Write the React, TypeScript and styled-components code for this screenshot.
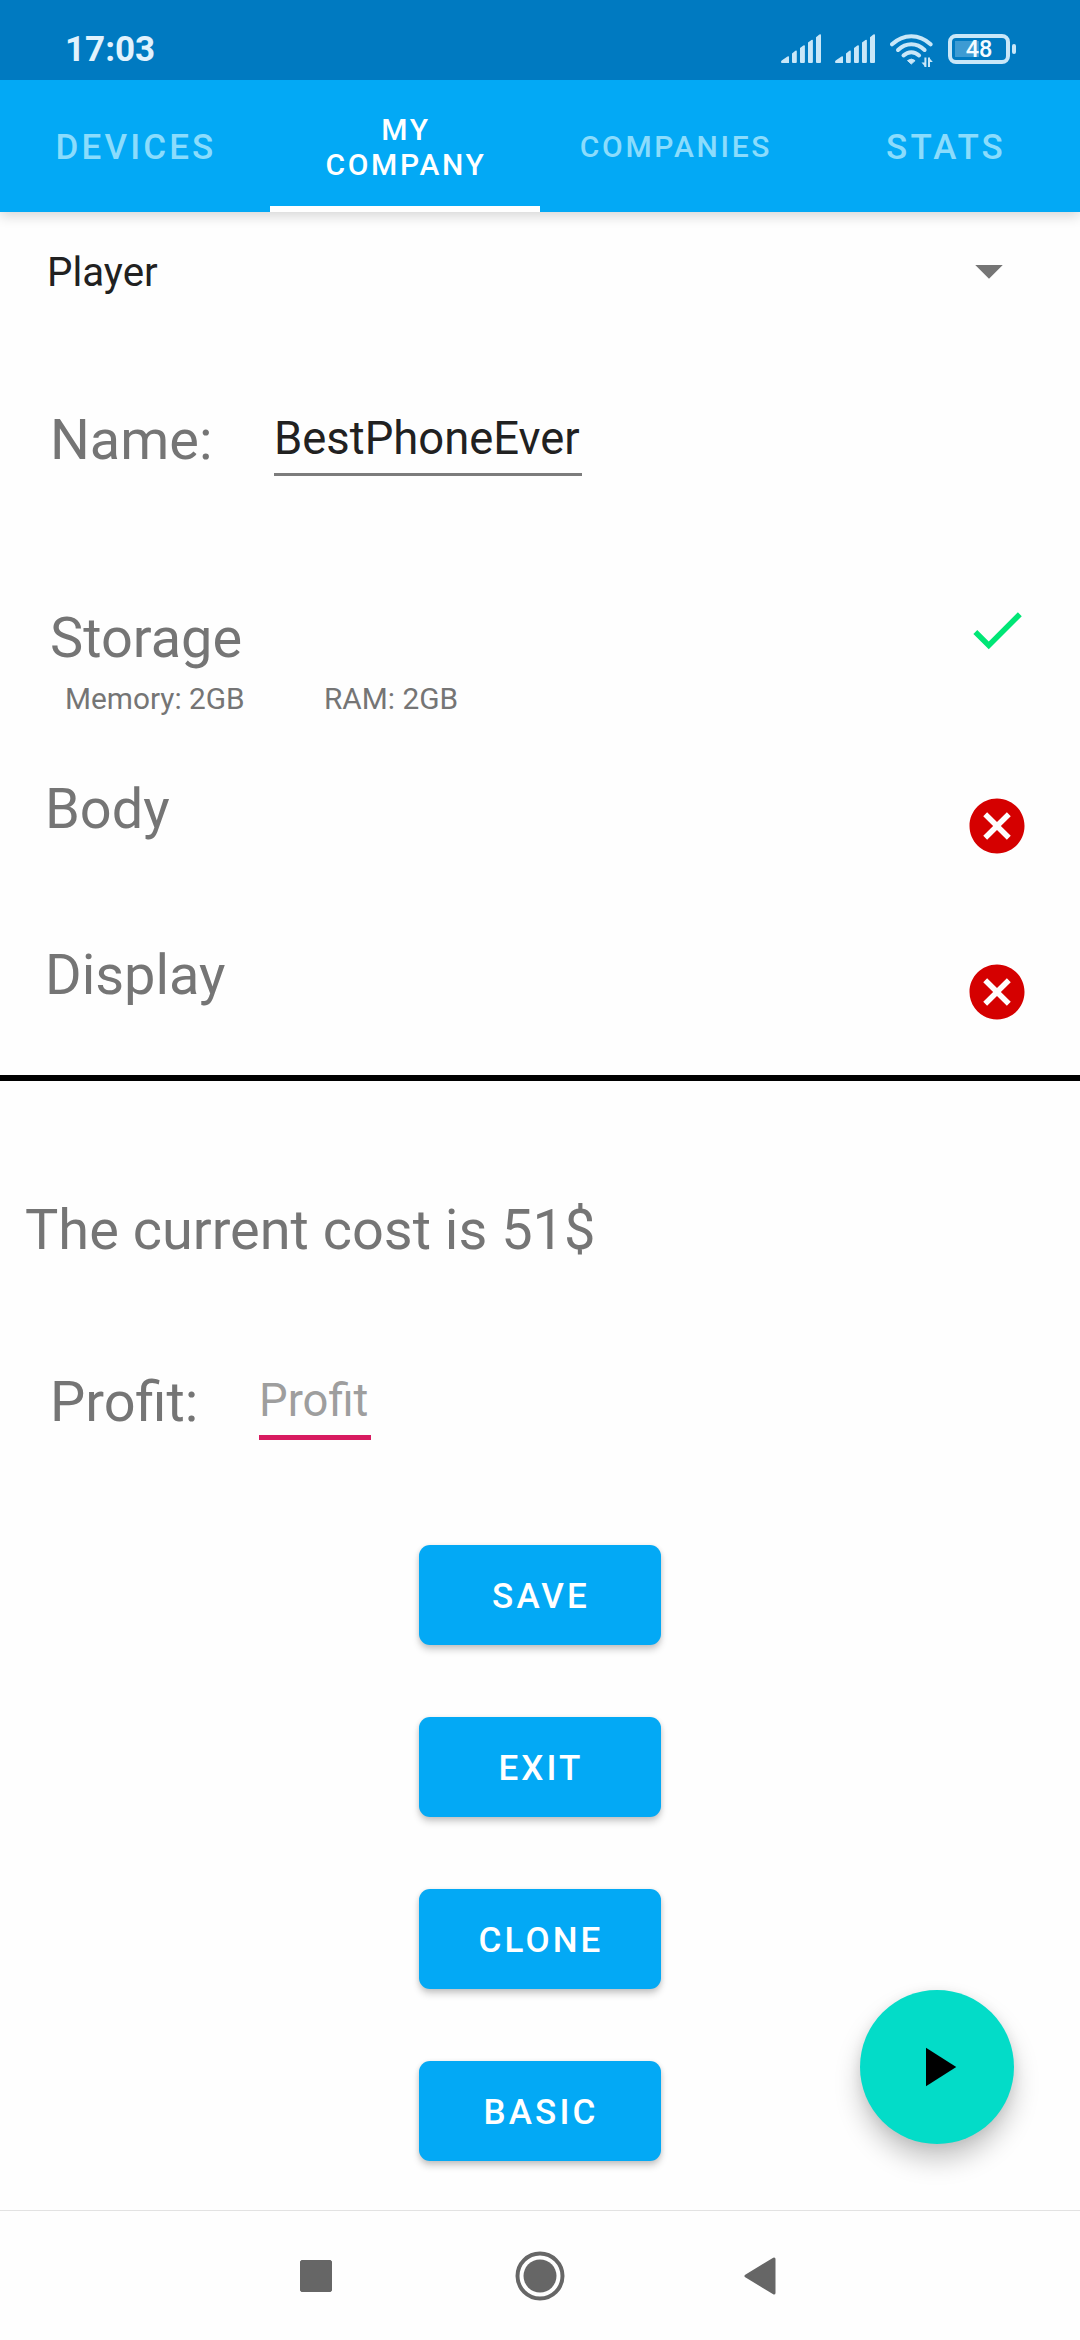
import React from "react";
import styled, { createGlobalStyle } from "styled-components";

const GlobalStyle = createGlobalStyle`
  html, body { margin: 0; padding: 0; background: #fefefe; }
  * { box-sizing: border-box; }
`;

const Screen = styled.div`
  position: relative;
  display: flex;
  flex-direction: column;
  width: 1080px;
  height: 2340px;
  overflow: hidden;
  background: #fefefe;
  color: #757575;
  font-family: Roboto, "Noto Sans", sans-serif;
`;

const StatusBar = styled.header`
  position: relative;
  z-index: 2;
  display: flex;
  flex: none;
  align-items: flex-start;
  justify-content: space-between;
  height: 80px;
  padding: 34px 64px 0 65px;
  background: #007ac1;
`;

const Clock = styled.time`
  margin-top: -4px;
  color: #e1f2fd;
  font-size: 35px;
  font-weight: 700;
  line-height: 40px;
`;

const StatusIcons = styled.div`
  display: flex;
  align-items: flex-start;
`;

const SignalIcon = styled.svg`
  width: 40px;
  height: 30px;
  margin-right: 14px;
  fill: #c9e7f8;
`;

const WifiIcon = styled.svg`
  width: 44px;
  height: 34px;
  margin: 0 14px 0 1px;
`;

const Battery = styled.div`
  display: flex;
  align-items: center;
  gap: 2px;
`;

const BatteryCase = styled.div`
  display: flex;
  align-items: center;
  justify-content: center;
  width: 62px;
  height: 30px;
  border: 4px solid #c9e7f8;
  border-radius: 8px;
  background: linear-gradient(#3d9bd3, #3d9bd3) 3px 3px / 24px 16px no-repeat;
  color: #f4fbff;
  font-size: 23.5px;
  font-weight: 500;
  line-height: 22px;
`;

const BatteryTip = styled.div`
  width: 4px;
  height: 10px;
  border-radius: 2px;
  background: #c9e7f8;
`;

const TabBar = styled.nav`
  position: relative;
  z-index: 1;
  display: grid;
  grid-template-columns: repeat(4, 270px);
  flex: none;
  height: 132px;
  background: #03a9f5;
  box-shadow: 0 4px 12px rgba(0, 0, 0, 0.16);
`;

const Tab = styled.a<{ $active?: boolean; $compact?: boolean }>`
  display: flex;
  align-items: center;
  justify-content: center;
  padding: ${(p) => (p.$active ? "8px 38px 0 40px" : p.$compact ? "0 0 0 2px" : "2px 0 0 2px")};
  border-bottom: ${(p) => (p.$active ? "6px solid #fff" : "none")};
  color: ${(p) => (p.$active ? "#fff" : "#8bdcfc")};
  font-size: ${(p) => (p.$compact ? "30px" : "35px")};
  font-weight: 500;
  line-height: ${(p) => (p.$compact ? "35px" : "41px")};
  letter-spacing: 0.0893em;
  text-align: center;
`;

const Content = styled.main`
  display: flex;
  flex-direction: column;
  flex: 1;
  min-height: 0;
`;

const Spinner = styled.div`
  display: flex;
  align-items: center;
  justify-content: space-between;
  flex: none;
  height: 120px;
  padding: 0 77px 0 47px;
  color: #212121;
  font-size: 40.3px;
  line-height: 48px;
`;

const Selected = styled.span`
  padding-top: 1px;
`;

const Caret = styled.svg`
  width: 28px;
  height: 14px;
  fill: #757575;
`;

const FieldRow = styled.div<{ $height: number; $top: number; $label: number }>`
  display: grid;
  grid-template-columns: ${(p) => p.$label}px auto;
  align-items: start;
  justify-content: start;
  flex: none;
  height: ${(p) => p.$height}px;
  padding: ${(p) => p.$top}px 0 0 50px;
`;

const Heading = styled.div`
  font-size: 55.9px;
  line-height: 66px;
  white-space: nowrap;
`;

const TextField = styled.div<{ $focused?: boolean; $width: number }>`
  width: ${(p) => p.$width}px;
  margin-top: 6px;
  padding-bottom: 8px;
  border-bottom: ${(p) => (p.$focused ? "5px solid #d81b60" : "3px solid #7c7c7c")};
  color: ${(p) => (p.$focused ? "#9e9e9e" : "#212121")};
  font-size: 45.4px;
  line-height: 52px;
  white-space: nowrap;
`;

const PartRow = styled.section<{ $height: number; $left: number }>`
  display: flex;
  align-items: flex-start;
  justify-content: space-between;
  flex: none;
  height: ${(p) => p.$height}px;
  padding: 0 50px 0 ${(p) => p.$left}px;
`;

const PartText = styled.div<{ $drop?: boolean }>`
  padding-top: ${(p) => (p.$drop ? 8 : 0)}px;
`;

const Specs = styled.div`
  display: grid;
  grid-template-columns: 259px auto;
  margin-top: 9px;
  padding-left: 15px;
  font-size: 29.8px;
  line-height: 37px;
`;

const PartIcon = styled.svg<{ $drop?: boolean }>`
  width: 66px;
  height: 66px;
  margin-top: ${(p) => (p.$drop ? 17 : 0)}px;
`;

const Divider = styled.hr`
  flex: none;
  width: 100%;
  height: 6px;
  margin: 0;
  border: 0;
  background: #000;
`;

const Cost = styled(Heading)`
  flex: none;
  height: 172px;
  margin-top: 116px;
  padding-left: 25px;
`;

const Actions = styled.div`
  display: flex;
  flex-direction: column;
  align-items: center;
  gap: 72px;
`;

const ActionButton = styled.button`
  width: 242px;
  height: 100px;
  padding: 2px 0 0 2px;
  border: 0;
  border-radius: 11px;
  background: #03a9f5;
  box-shadow: 0 5px 7px rgba(0, 0, 0, 0.18), 0 1px 5px rgba(0, 0, 0, 0.1);
  color: #fff;
  font-family: inherit;
  font-size: 35px;
  font-weight: 500;
  letter-spacing: 0.0893em;
`;

const Fab = styled.button`
  position: absolute;
  right: 66px;
  bottom: 196px;
  display: grid;
  place-items: center;
  width: 154px;
  height: 154px;
  padding: 0;
  border: 0;
  border-radius: 50%;
  background: #03dcc8;
  box-shadow: 0 16px 26px rgba(0, 0, 0, 0.22), 0 2px 12px rgba(0, 0, 0, 0.08);
`;

const NavBar = styled.footer`
  flex: none;
  display: flex;
  align-items: center;
  height: 130px;
  padding: 0 304px 0 300px;
  justify-content: space-between;
  border-top: 1px solid #e2e2e2;
`;

const NavIcon = styled.svg`
  fill: #666;
  stroke: #666;
`;

const HomeIcon = styled(NavIcon)`
  margin-left: 3px;
`;

const Signal = () => (
  <SignalIcon viewBox="0 0 40 30">
    <path d="M0 28Q0 27 1 26.3L6.5 22.6Q8 21.6 8 23V29H1Q0 29 0 28Z" />
    <path d="M11 19.4L14.4 16.8Q15.8 16 15.8 17.6V28Q15.8 29 14.8 29H12Q11 29 11 28Z" />
    <path d="M19 14L22.4 11.4Q23.9 10.6 23.9 12.2V28Q23.9 29 22.9 29H20Q19 29 19 28Z" />
    <path d="M27 8.6L30.4 6Q31.9 5.2 31.9 6.8V28Q31.9 29 30.9 29H28Q27 29 27 28Z" />
    <path d="M35 3.2L38.4 .6Q40 -.2 40 1.4V28Q40 29 39 29H36Q35 29 35 28Z" />
  </SignalIcon>
);

const Wifi = () => (
  <WifiIcon viewBox="0 0 44 34" fill="none" stroke="#c9e7f8" strokeWidth="4">
    <path d="M2 10.3Q10.5 2.2 21.3 2.2T40.6 10.3" strokeLinecap="round" />
    <path d="M8 16Q14 10.3 21.3 10.3T34.6 16" strokeLinecap="round" />
    <path d="M13.5 21.5Q17 18.2 21.3 18.2T29.1 21.5" strokeLinecap="round" />
    <path d="M17.5 26.6Q21.3 23.6 25.1 26.6L21.3 30Z" fill="#c9e7f8" strokeWidth="1" strokeLinejoin="round" />
    <path d="M35.4 23.5V33M39 33V23.5" strokeWidth="2" />
    <path d="M31.5 28.5H35V32.5ZM42.8 28H39.4V24Z" fill="#c9e7f8" stroke="none" />
  </WifiIcon>
);

const Cancel = () => (
  <PartIcon $drop viewBox="0 0 24 24" fill="#d50000">
    <path d="M12 2C6.47 2 2 6.47 2 12s4.47 10 10 10 10-4.47 10-10S17.53 2 12 2zm5 13.59L15.59 17 12 13.41 8.41 17 7 15.59 10.59 12 7 8.41 8.41 7 12 10.59 15.59 7 17 8.41 13.41 12 17 15.59z" />
  </PartIcon>
);

const actions = ["SAVE", "EXIT", "CLONE", "BASIC"];

export default function App() {
  return (
    <>
      <GlobalStyle />
      <Screen>
        <StatusBar>
          <Clock>17:03</Clock>
          <StatusIcons>
            <Signal />
            <Signal />
            <Wifi />
            <Battery>
              <BatteryCase>48</BatteryCase>
              <BatteryTip />
            </Battery>
          </StatusIcons>
        </StatusBar>
        <TabBar>
          <Tab>DEVICES</Tab>
          <Tab $active $compact>MY COMPANY</Tab>
          <Tab $compact>COMPANIES</Tab>
          <Tab>STATS</Tab>
        </TabBar>
        <Content>
          <Spinner>
            <Selected>Player</Selected>
            <Caret viewBox="0 0 28 14">
              <path d="M.25 0h27.5L14 13.75z" />
            </Caret>
          </Spinner>
          <FieldRow $height={265} $top={75} $label={224}>
            <Heading>Name:</Heading>
            <TextField $width={308}>BestPhoneEver</TextField>
          </FieldRow>
          <PartRow $height={179} $left={50}>
            <PartText $drop>
              <Heading>Storage</Heading>
              <Specs>
                <span>Memory: 2GB</span>
                <span>RAM: 2GB</span>
              </Specs>
            </PartText>
            <PartIcon viewBox="0 0 24 24" fill="#00e676">
              <path d="M9 16.17L4.83 12l-1.42 1.41L9 19 21 7l-1.41-1.41z" />
            </PartIcon>
          </PartRow>
          <PartRow $height={166} $left={45}>
            <Heading>Body</Heading>
            <Cancel />
          </PartRow>
          <PartRow $height={133} $left={45}>
            <Heading>Display</Heading>
            <Cancel />
          </PartRow>
          <Divider />
          <Cost>The current cost is 51$</Cost>
          <FieldRow $height={176} $top={0} $label={209}>
            <Heading>Profit:</Heading>
            <TextField $focused $width={112}>Profit</TextField>
          </FieldRow>
          <Actions>
            {actions.map((label) => (
              <ActionButton key={label}>{label}</ActionButton>
            ))}
          </Actions>
        </Content>
        <NavBar>
          <NavIcon width="32" height="32" viewBox="0 0 32 32">
            <rect x=".5" y=".5" width="31" height="31" rx="1.5" />
          </NavIcon>
          <HomeIcon width="50" height="50" viewBox="0 0 50 50">
            <circle cx="25" cy="25" r="22.5" fill="none" strokeWidth="4" />
            <circle cx="25" cy="25" r="16.5" stroke="none" />
          </HomeIcon>
          <NavIcon width="32" height="38" viewBox="0 0 32 38">
            <path d="M2 19L30 2V36Z" strokeWidth="3" strokeLinejoin="round" />
          </NavIcon>
        </NavBar>
        <Fab aria-label="Play">
          <svg width="66" height="66" viewBox="0 0 24 24">
            <path d="M8 5v14l11-7z" />
          </svg>
        </Fab>
      </Screen>
    </>
  );
}
